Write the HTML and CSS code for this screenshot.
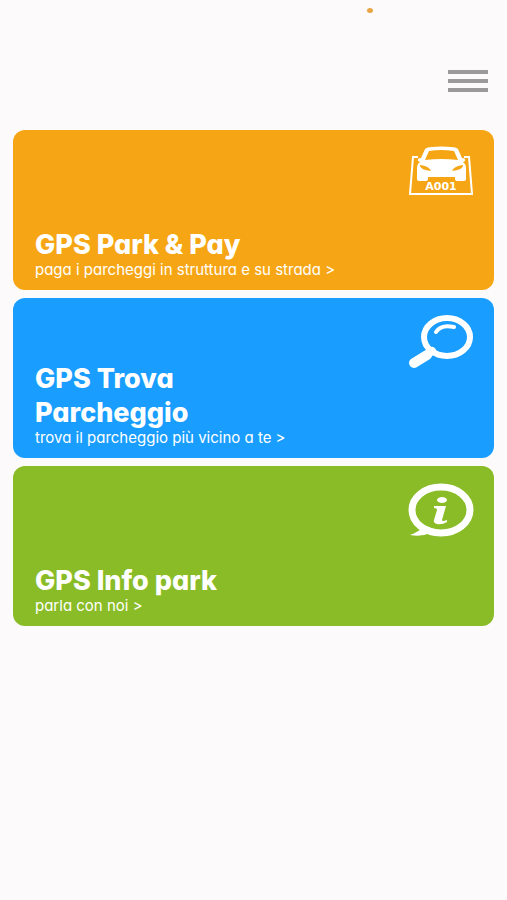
FILE: index.html
```html
<!DOCTYPE html>
<html lang="it">
<head>
<meta charset="utf-8">
<meta name="viewport" content="width=device-width, initial-scale=1">
<title>GPS Park</title>
<link rel="stylesheet" href="styles.css">
</head>
<body>
<span class="status-dot"></span>
<header class="topbar">
  <button class="menu" type="button" aria-label="Menu"><span></span><span></span><span></span></button>
</header>
<main class="cards">
  <a class="card card-pay" href="#pay">
    <svg class="icon" viewBox="0 0 66 54" aria-hidden="true">
      <path d="M10 11H5L2 48H64L61 11H56" fill="none" stroke="#fff" stroke-width="2"/>
      <path fill="#fff" fill-rule="evenodd" d="M17 3Q19 1 24 1Q33 0 43 1Q48 1 50 3L54 12Q58 12 57 15L55 16Q58 18 58 22V33Q58 35 55 35H50Q47 35 47 33V31H20V33Q20 35 17 35H12Q9 35 9 33V22Q9 18 12 16L10 15Q9 12 13 12ZM21 5L17 14Q33 12 50 14L46 5Q33 3 21 5ZM12 20Q13 24 23 25Q21 20 12 19ZM55 19Q46 20 44 25Q54 24 55 20Z"/>
      <text class="plate" x="33" y="44" text-anchor="middle">A001</text>
    </svg>
    <h2>GPS Park &amp; Pay</h2>
    <p>paga i parcheggi in struttura e su strada &gt;</p>
  </a>
  <a class="card card-find" href="#find">
    <svg class="icon" viewBox="0 0 66 54" aria-hidden="true">
      <g fill="none" stroke="#fff" stroke-linecap="round">
        <ellipse cx="39" cy="23" rx="23" ry="19" stroke-width="6"/>
        <path d="M28 18Q33 10 46 13" stroke-width="4"/>
        <path d="M24 37L20 40" stroke-width="8"/>
        <path d="M19 41L6 49" stroke-width="10"/>
      </g>
    </svg>
    <h2>GPS Trova Parcheggio</h2>
    <p>trova il parcheggio più vicino a te &gt;</p>
  </a>
  <a class="card card-info" href="#info">
    <svg class="icon" viewBox="0 0 66 54" aria-hidden="true">
      <ellipse cx="33" cy="28" rx="29" ry="23" fill="none" stroke="#fff" stroke-width="7"/>
      <path fill="#fff" d="M8 40L14 46Q10 50 2 53Q14 55 22 51L26 47Z"/>
      <ellipse cx="34" cy="18" rx="5" ry="3" fill="#fff"/>
      <path fill="#fff" d="M26 24H38L34 38Q34 40 39 38V40Q34 43 29 42Q25 41 26 38L29 28Q29 26 26 26Z"/>
    </svg>
    <h2>GPS Info park</h2>
    <p>parla con noi &gt;</p>
  </a>
</main>
</body>
</html>
```
FILE: styles.css
```css
* { box-sizing: border-box; }
body {
  margin: 0;
  min-height: 100vh;
  background: #fcfafb;
  font-family: Inter, "Open Sans", sans-serif;
  font-feature-settings: "cv11";
}
.status-dot {
  position: absolute;
  top: 8px;
  left: 73%;
  width: 6px;
  height: 5px;
  margin-left: -3px;
  border-radius: 50%;
  background: #e9a445;
}
.topbar {
  display: flex;
  justify-content: flex-end;
  padding: 70px 19px 0;
}
.menu {
  display: flex;
  flex-direction: column;
  gap: 5px;
  width: 40px;
  padding: 0;
  border: 0;
  background: none;
  cursor: pointer;
}
.menu span { width: 100%; height: 4px; background: #9b999a; }
.cards {
  display: grid;
  gap: 8px;
  padding: 38px 13px 16px;
}
.card {
  position: relative;
  display: flex;
  flex-direction: column;
  justify-content: flex-end;
  min-height: 160px;
  padding: 16px 22px 12px;
  border-radius: 12px;
  color: #fff;
  text-decoration: none;
}
.card-pay { background: #f6a614; }
.card-find { background: #199eff; }
.card-info { background: #89bc27; }
.icon {
  position: absolute;
  top: 16px;
  right: 20px;
  width: 66px;
  height: 54px;
  overflow: visible;
}
.plate { fill: #fff; font: 700 11px "DejaVu Sans", sans-serif; }
h2 {
  max-width: 230px;
  margin: 0;
  font-size: 27px;
  font-weight: 800;
  line-height: 34px;
}
p { margin: 0; font-size: 15px; line-height: 16px; }
```
